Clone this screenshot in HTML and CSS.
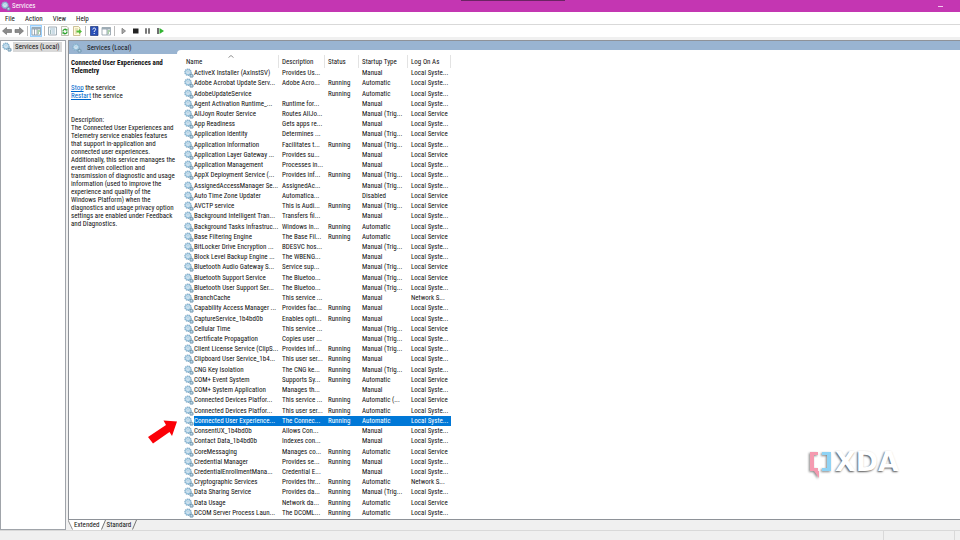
FILE: index.html
```html
<!DOCTYPE html>
<html lang="en">
<head>
<meta charset="utf-8">
<title>Services</title>
<link rel="stylesheet" href="styles.css">
</head>
<body>
<svg class="defs" aria-hidden="true">
  <symbol id="gears" viewBox="0 0 10 10">
    <circle cx="4" cy="4.200" r="3" fill="#d9eef8" stroke="#86adc8" stroke-width="1.500" stroke-dasharray="1.300 .5"/>
    <circle cx="4" cy="4.200" r="2.400" fill="#e2f3fb" stroke="#86b7d6" stroke-width=".8"/>
    <circle cx="4" cy="4.200" r="1" fill="#fff" stroke="#7fa9c6" stroke-width=".5"/>
    <circle cx="7.500" cy="7.700" r="1.500" fill="#b9d8ea" stroke="#6c91a8" stroke-width="1.300" stroke-dasharray=".9 .3"/>
  </symbol>
</svg>
<div class="window">
  <header class="titlebar">
    <svg class="gear"><use href="#gears"/></svg>
    <span class="title">Services</span>
    <i class="handle"></i>
    <button class="minimize" aria-label="Minimize"></button>
  </header>
  <nav class="menubar">
    <button>File</button><button>Action</button><button>View</button><button>Help</button>
  </nav>
  <div class="toolbar">
    <button aria-label="Back"><svg viewBox="0 0 12 12"><path d="M1.500 6 5.500 2.500V4.500H10.500V7.500H5.500V9.500Z" fill="#8b8b8b" stroke="#666" stroke-width=".6"/></svg></button>
    <button aria-label="Forward"><svg viewBox="0 0 12 12"><path d="M10.500 6 6.500 2.500V4.500H2V7.500H6.500V9.500Z" fill="#8b8b8b" stroke="#666" stroke-width=".6"/></svg></button>
    <i class="sep"></i>
    <button class="on" aria-label="Show or hide console tree"><svg viewBox="0 0 12 12"><path d="M2 2.500H10.500V10H2Z" fill="#fff" stroke="#8193a0" stroke-width=".8"/><path d="M2 3.500H10.500" stroke="#9cabb5" stroke-width="2"/><path d="M4.500 4V10M7 4V10" stroke="#8193a0" stroke-width=".8"/><path d="M7.500 6H10M7.500 8H9" stroke="#58a058"/></svg></button>
    <i class="sep"></i>
    <button aria-label="Properties"><svg viewBox="0 0 12 12"><path d="M1.500 2H9.500V10H1.500Z" fill="#f5f9fb" stroke="#8c9ba5" stroke-width=".8"/><path d="M3 4H8M4.500 6H8M4.500 8H8" stroke="#8fb2c8" stroke-width=".8"/><path d="M3 6H4M3 8H4" stroke="#477"/></svg></button>
    <button aria-label="Refresh"><svg viewBox="0 0 12 12"><path d="M2.500 1.500H8L9.500 3V10.500H2.500Z" fill="#fafafa" stroke="#a5a58f" stroke-width=".7"/><path d="M4 6.500A2 2 0 0 1 7.500 5M8 6.500A2 2 0 0 1 4.500 8" fill="none" stroke="#2da32d" stroke-width="1.300"/><path d="M6.500 5.500 8.500 3.500V5.800ZM5.500 7.300 3.500 9.300V7Z" fill="#2da32d"/></svg></button>
    <button aria-label="Export list"><svg viewBox="0 0 12 12"><path d="M2.500 1.500H7.500L9 3V10.500H2.500Z" fill="#fffbdc" stroke="#b8a873" stroke-width=".7"/><path d="M4 4H7M4 6H6M4 8H6" stroke="#b8a873" stroke-width=".6"/><path d="M5.500 5.500H8V4L11 6.500 8 9V7.500H5.500Z" fill="#55bd3b"/></svg></button>
    <i class="sep"></i>
    <button aria-label="Help"><svg viewBox="0 0 12 12"><path d="M2.500 1.500H10V10.500H2.500Z" fill="#2950b8" stroke="#1d3478" stroke-width=".7"/><path d="M4.800 4.500C4.800 2.500 7.800 2.600 7.600 4.500 7.500 5.500 6.200 5.500 6.200 7M6.200 8V9" fill="none" stroke="#fff" stroke-width="1"/></svg></button>
    <button aria-label="Show or hide action pane"><svg viewBox="0 0 12 12"><path d="M2 2.500H10.500V10H2Z" fill="#fff" stroke="#8c9ba5" stroke-width=".8"/><path d="M2 3.500H10.500" stroke="#9cabb5" stroke-width="2"/><path d="M7 4V10" stroke="#8193a0" stroke-width=".8"/><path d="M7.500 6H10M7.500 8H9" stroke="#58a058"/></svg></button>
    <i class="sep"></i>
    <button aria-label="Start service"><svg viewBox="0 0 12 12"><path d="M5 3.300 8.500 6 5 8.800Z" fill="#aaa" stroke="#777" stroke-width=".8"/></svg></button>
    <button aria-label="Stop service"><svg viewBox="0 0 12 12"><path d="M4 3.500H9.500V8.500H4Z" fill="#222"/></svg></button>
    <button aria-label="Pause service"><svg viewBox="0 0 12 12"><path d="M5 3.300V8.700M8 3.300V8.700" stroke="#333" stroke-width="1.300"/></svg></button>
    <button aria-label="Restart service"><svg viewBox="0 0 12 12"><path d="M5 3V9" stroke="#222" stroke-width="1.300"/><path d="M6.500 3 11 6 6.500 9Z" fill="#32b432"/></svg></button>
  </div>
  <main class="panes">
    <aside class="tree"><button class="node"><svg class="gear"><use href="#gears"/></svg><span>Services (Local)</span></button></aside>
    <section class="result">
      <div class="view">
        <h1 class="banner"><svg class="gear"><use href="#gears"/></svg><span>Services (Local)</span></h1>
        <div class="content">
          <div class="detail">
            <h2>Connected User Experiences and Telemetry</h2>
            <p><a href="#">Stop</a> the service<br><a href="#">Restart</a> the service</p>
            <p>Description:<br>The Connected User Experiences and<br>Telemetry service enables features<br>that support in-application and<br>connected user experiences.<br>Additionally, this service manages the<br>event driven collection and<br>transmission of diagnostic and usage<br>information (used to improve the<br>experience and quality of the<br>Windows Platform) when the<br>diagnostics and usage privacy option<br>settings are enabled under Feedback<br>and Diagnostics.</p>
          </div>
          <div class="list">
            <table>
              <thead><tr><th>Name<svg class="sort" viewBox="0 0 6 3"><path d="M.5 2.500 3 .5 5.500 2.500" fill="none" stroke="#777" stroke-width=".8"/></svg></th><th>Description</th><th>Status</th><th>Startup Type</th><th>Log On As</th></tr></thead>
              <tbody id="services"></tbody>
            </table>
            <div class="brand">
              <svg viewBox="0 0 26 30"><path d="M9 1H1V20H5L10 27V20H9V17H5V4H9Z" fill="#f59ab0"/><path d="M13 1H22V20H13V17H18V4H13Z" fill="#8fd3f5"/></svg><span>XDA</span>
            </div>
          </div>
        </div>
      </div>
      <div class="tabs">
        <svg class="edge" viewBox="0 0 5 10"><path d="M0 0 4.500 9.500H5V0Z" fill="#fff"/><path d="M0 0 4.500 9.500" stroke="#777" stroke-width=".8"/></svg><button class="active">Extended</button><svg class="edge" viewBox="0 0 5 10"><path d="M0 0H5L.5 9.500H0Z" fill="#fff"/><path d="M4.500 0 .5 9.500" stroke="#666" stroke-width=".9"/></svg><button>Standard</button><svg class="edge" viewBox="0 0 5 10"><path d="M4.500 0 .5 9.500" stroke="#666" stroke-width=".9"/></svg>
      </div>
    </section>
  </main>
  <footer class="statusbar"><span></span><span></span><span></span></footer>
</div>
<script src="script.js"></script>
</body>
</html>
```
FILE: styles.css
```css
* { box-sizing: border-box; }
body {
  margin: 0;
  font: 7px/8px "Roboto Condensed", Lato, sans-serif;
  color: #111;
}
button {
  font: inherit;
  color: inherit;
  background: none;
  border: 0;
  padding: 0;
}
svg { display: block; }
.defs { position: absolute; width: 0; height: 0; }
.gear { width: 10px; height: 10px; flex: none; }
.window {
  display: flex;
  flex-direction: column;
  height: 100vh;
  background: #f0f0f0;
}
.titlebar {
  position: relative;
  display: flex;
  align-items: center;
  flex: none;
  height: 12px;
  padding: 0 17px 0 1px;
  gap: 1px;
  background: #c436b2;
  color: #fff;
}
.title { line-height: 10px; }
.handle { position: absolute; top: 0; left: 48%; width: 104px; height: 1px; background: #6b2463; }
.minimize { width: 5px; height: 1px; margin-left: auto; background: #f3c8ee; }
.menubar {
  display: flex;
  flex: none;
  gap: 10px;
  height: 13px;
  padding: 1px 5px 0;
  background: #fff;
  border-bottom: 1px solid #d9d9d9;
}
.toolbar {
  display: flex;
  align-items: center;
  flex: none;
  height: 12px;
  padding-left: 1px;
  background: #fff;
}
.toolbar button { width: 12px; height: 12px; }
.toolbar .on { background: #cce8ff; outline: 1px solid #99d1ff; outline-offset: -1px; }
.toolbar svg { width: 12px; height: 12px; }
.sep { width: 1px; height: 10px; margin: 0 2px; background: #bbb; }
.panes {
  display: flex;
  flex: 1;
  min-height: 0;
  gap: 2px;
  padding-top: 3px;
}
.tree {
  width: 66px;
  flex: none;
  background: #fff;
  border: 1px solid #a0a4aa;
}
.node { display: flex; align-items: center; gap: 1px; height: 11px; padding-left: 1px; }
.node span { padding: 0 2px; background: #d9d9d9; line-height: 10px; }
.result { display: flex; flex-direction: column; flex: 1; min-width: 0; }
.view {
  display: flex;
  flex-direction: column;
  flex: 1;
  min-height: 0;
  background: #fff;
  border: 1px solid #8e9298;
  border-right: 0;
}
.banner {
  display: flex;
  align-items: center;
  flex: none;
  gap: 5px;
  height: 13px;
  margin: 0;
  padding: 1px 0 0 3px;
  background: #99b4d1;
  font: inherit;
}
.content { display: flex; flex: 1; min-height: 0; }
.detail { width: 108px; flex: none; padding: 5px 0 0 2px; white-space: nowrap; }
.detail h2 { margin: 0 0 9px; font-size: 7px; white-space: normal; }
.detail p { margin: 0 0 16px; }
a { color: #0066cc; }
.list {
  position: relative;
  display: flex;
  flex: 1;
  margin-top: -4px;
  padding-left: 7px;
  background: #fff;
  border-top-left-radius: 4px;
}
table { display: flex; flex-direction: column; white-space: nowrap; }
thead { display: block; flex: none; padding-top: 5px; }
tbody { display: grid; flex: 1; grid-auto-rows: 1fr; min-height: 0; padding-bottom: 1px; }
tr { display: grid; grid-template-columns: 95px 46px 34px 49px 43px; align-items: center; }
th, td { padding: 0 0 0 3px; font-weight: normal; text-align: left; }
th { position: relative; height: 13px; line-height: 14px; border-right: 1px solid #e3e3e3; }
th:first-child { padding-left: 2px; }
.sort { position: absolute; top: 0; left: 44px; width: 6px; height: 3px; }
td:first-child { position: relative; display: flex; align-items: center; padding: 0; }
td { min-height: 8px; line-height: 10px; }
tr.selected { background: linear-gradient(90deg, transparent 10px, #0078d7 10px); color: #fff; }
.arrow { position: absolute; right: 100%; top: 0; width: 36px; height: 28px; }
.brand {
  position: absolute;
  right: 61px;
  bottom: 38px;
  display: flex;
  align-items: flex-start;
  font: bold 27px/30px "DejaVu Sans", sans-serif;
  color: #fff;
  text-shadow: -1px 1px 2px #555;
}
.brand svg { width: 26px; height: 30px; margin-top: 4px; filter: drop-shadow(-1px 1px 1px #888); }
.tabs { display: flex; flex: none; height: 10px; line-height: 10px; }
.tabs button { padding: 0 1px; }
.edge { width: 5px; height: 10px; }
.tabs .active { background: #fff; }
.statusbar { display: flex; flex: none; height: 10px; border-top: 1px solid #d9d9d9; }
.statusbar span { border-right: 1px solid #d9d9d9; width: 71px; }
.statusbar span:first-child { flex: 1; }
.statusbar span:last-child { width: 5px; border: 0; }
```
FILE: script.js
```js
// name | description | status | startup type | log on as
// R = Running; M = Manual, T = trigger start, A = Automatic; S = system, L = local service, N = network
const rows = `ActiveX Installer (AxInstSV)|Provides Us...||M|S
Adobe Acrobat Update Serv...|Adobe Acro...|R|A|S
AdobeUpdateService||R|A|S
Agent Activation Runtime_...|Runtime for...||M|S
AllJoyn Router Service|Routes AllJo...||T|L
App Readiness|Gets apps re...||M|S
Application Identity|Determines ...||T|L
Application Information|Facilitates t...|R|T|S
Application Layer Gateway ...|Provides su...||M|L
Application Management|Processes in...||M|S
AppX Deployment Service (...|Provides inf...|R|T|S
AssignedAccessManager Se...|AssignedAc...||T|S
Auto Time Zone Updater|Automatica...||D|L
AVCTP service|This is Audi...|R|T|L
Background Intelligent Tran...|Transfers fil...||M|S
Background Tasks Infrastruc...|Windows in...|R|A|S
Base Filtering Engine|The Base Fil...|R|A|L
BitLocker Drive Encryption ...|BDESVC hos...||T|S
Block Level Backup Engine ...|The WBENG...||M|S
Bluetooth Audio Gateway S...|Service sup...||T|L
Bluetooth Support Service|The Bluetoo...||T|L
Bluetooth User Support Ser...|The Bluetoo...||T|S
BranchCache|This service ...||M|N
Capability Access Manager ...|Provides fac...|R|M|S
CaptureService_1b4bd0b|Enables opti...|R|M|S
Cellular Time|This service ...||T|L
Certificate Propagation|Copies user ...||T|S
Client License Service (ClipS...|Provides inf...|R|T|S
Clipboard User Service_1b4...|This user ser...|R|M|S
CNG Key Isolation|The CNG ke...|R|T|S
COM+ Event System|Supports Sy...|R|A|L
COM+ System Application|Manages th...||M|S
Connected Devices Platfor...|This service ...|R|B|L
Connected Devices Platfor...|This user ser...|R|A|S
Connected User Experience...|The Connec...|R|A|S
ConsentUX_1b4bd0b|Allows Con...||M|S
Contact Data_1b4bd0b|Indexes con...||M|S
CoreMessaging|Manages co...|R|A|L
Credential Manager|Provides se...|R|M|S
CredentialEnrollmentMana...|Credential E...||M|S
Cryptographic Services|Provides thr...|R|A|N
Data Sharing Service|Provides da...|R|T|S
Data Usage|Network da...|R|A|L
DCOM Server Process Laun...|The DCOML...|R|A|S`.split("\n");
const startup = { M: "Manual", T: "Manual (Trig...", A: "Automatic", B: "Automatic (...", D: "Disabled" };
const logon = { S: "Local Syste...", L: "Local Service", N: "Network S..." };
const arrow = '<svg class="arrow" viewBox="0 0 36 28"><path d="M0 21 18 9 15.500 4.500 29 5.500 24 20 21.500 16 5 27.500Z" fill="#fb0007"/></svg>';
document.getElementById("services").innerHTML = rows.map((row) => {
  const [name, text, status, start, log] = row.split("|");
  const selected = name.startsWith("Connected User");
  return `<tr${selected ? ' class="selected"' : ""}><td><svg class="gear"><use href="#gears"/></svg><span>${name}</span>${selected ? arrow : ""}</td><td>${text}</td><td>${status ? "Running" : ""}</td><td>${startup[start]}</td><td>${logon[log]}</td></tr>`;
}).join("");
```
